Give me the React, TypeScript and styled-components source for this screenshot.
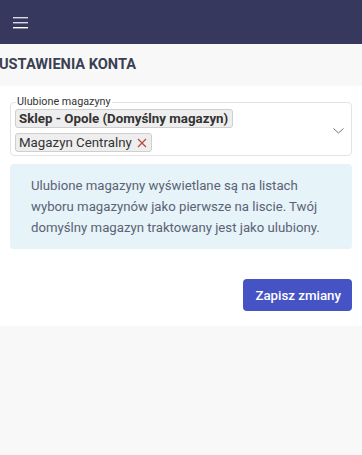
import styled, { createGlobalStyle } from 'styled-components';

const GlobalStyle = createGlobalStyle`
  html, body {
    margin: 0;
    padding: 0;
    background: #f8f8f8;
    font-family: Roboto, "Liberation Sans", sans-serif;
  }
  * { box-sizing: border-box; }
`;

export default function App() {
  return (
    <>
      <GlobalStyle />
      <TopBar>
        <MenuButton aria-label="menu">
          <svg width="15" height="13" viewBox="0 0 15 13">
            <rect x="0" y="1" width="15" height="1.4" fill="#d8d9e6" />
            <rect x="0" y="6" width="15" height="1.4" fill="#d8d9e6" />
            <rect x="0" y="11" width="15" height="1.4" fill="#ffffff" />
          </svg>
        </MenuButton>
      </TopBar>
      <PageHeader>
        <Title>USTAWIENIA KONTA</Title>
      </PageHeader>
      <Content>
        <Field>
          <Legend>Ulubione magazyny</Legend>
          <Chips>
            <Chip $bold>Sklep - Opole (Domyślny magazyn)</Chip>
            <Chip>
              Magazyn Centralny
              <svg width="10" height="10" viewBox="0 0 10 10">
                <path d="M1 1 L9 9 M9 1 L1 9" stroke="#b84a3c" strokeWidth="1.2" />
              </svg>
            </Chip>
          </Chips>
          <Chevron width="11" height="6" viewBox="0 0 11 6">
            <path d="M0.5 0.5 L5.5 5 L10.5 0.5" fill="none" stroke="#6b7286" strokeWidth="1" />
          </Chevron>
        </Field>
        <Info>
          Ulubione magazyny wyświetlane są na listach wyboru magazynów jako pierwsze na liscie. Twój
          domyślny magazyn traktowany jest jako ulubiony.
        </Info>
        <Actions>
          <SaveButton>Zapisz zmiany</SaveButton>
        </Actions>
      </Content>
    </>
  );
}

const TopBar = styled.header`
  height: 44px;
  background: #37385e;
  display: flex;
  align-items: center;
  padding-left: 13px;
`;

const MenuButton = styled.button`
  background: none;
  border: none;
  padding: 0;
  display: flex;
  margin-top: 1px;
`;

const PageHeader = styled.div`
  height: 42px;
  display: flex;
  align-items: center;
  background: #f8f8f8;
  overflow: hidden;
`;

const Title = styled.h1`
  margin: -2px 0 0 -1px;
  font-size: 14.6px;
  font-weight: 700;
  color: #3a3f52;
`;

const Content = styled.main`
  background: #fff;
  padding: 11px 10px 15px;
  display: flex;
  flex-direction: column;
`;

const Field = styled.fieldset`
  position: relative;
  margin: 0;
  border: 1px solid #e3e3e3;
  border-radius: 4px;
  padding: 0 30px 3px 4px;
  min-height: 55px;
`;

const Legend = styled.legend`
  font-size: 10.8px;
  color: #333;
  padding: 0 1px;
  margin-left: 1px;
  line-height: 10px;
`;

const Chips = styled.div`
  display: flex;
  flex-direction: column;
  align-items: flex-start;
  gap: 5px;
  padding-top: 2px;
`;

const Chip = styled.span<{ $bold?: boolean }>`
  display: inline-flex;
  align-items: center;
  gap: 5px;
  height: 19px;
  padding: 0 4px 0 3px;
  background: #eeeeee;
  border: 1px solid #cfcfcf;
  border-radius: 3px;
  font-size: 13.3px;
  font-weight: ${(p) => (p.$bold ? 700 : 400)};
  color: #333;
  white-space: nowrap;
`;

const Chevron = styled.svg`
  position: absolute;
  right: 7px;
  top: 21px;
`;

const Info = styled.div`
  margin-top: 8px;
  background: #e6f3f8;
  border-radius: 4px;
  padding: 11px 20px 11px 21px;
  font-size: 13.2px;
  line-height: 21px;
  color: #5b6275;
`;

const Actions = styled.div`
  display: flex;
  justify-content: flex-end;
  margin-top: 30px;
`;

const SaveButton = styled.button`
  height: 32px;
  padding: 0 11px 0 12px;
  background: #4653c4;
  color: #fff;
  border: none;
  border-radius: 4px;
  font-family: Roboto, "Liberation Sans", sans-serif;
  font-size: 13.3px;
  font-weight: 500;
`;
